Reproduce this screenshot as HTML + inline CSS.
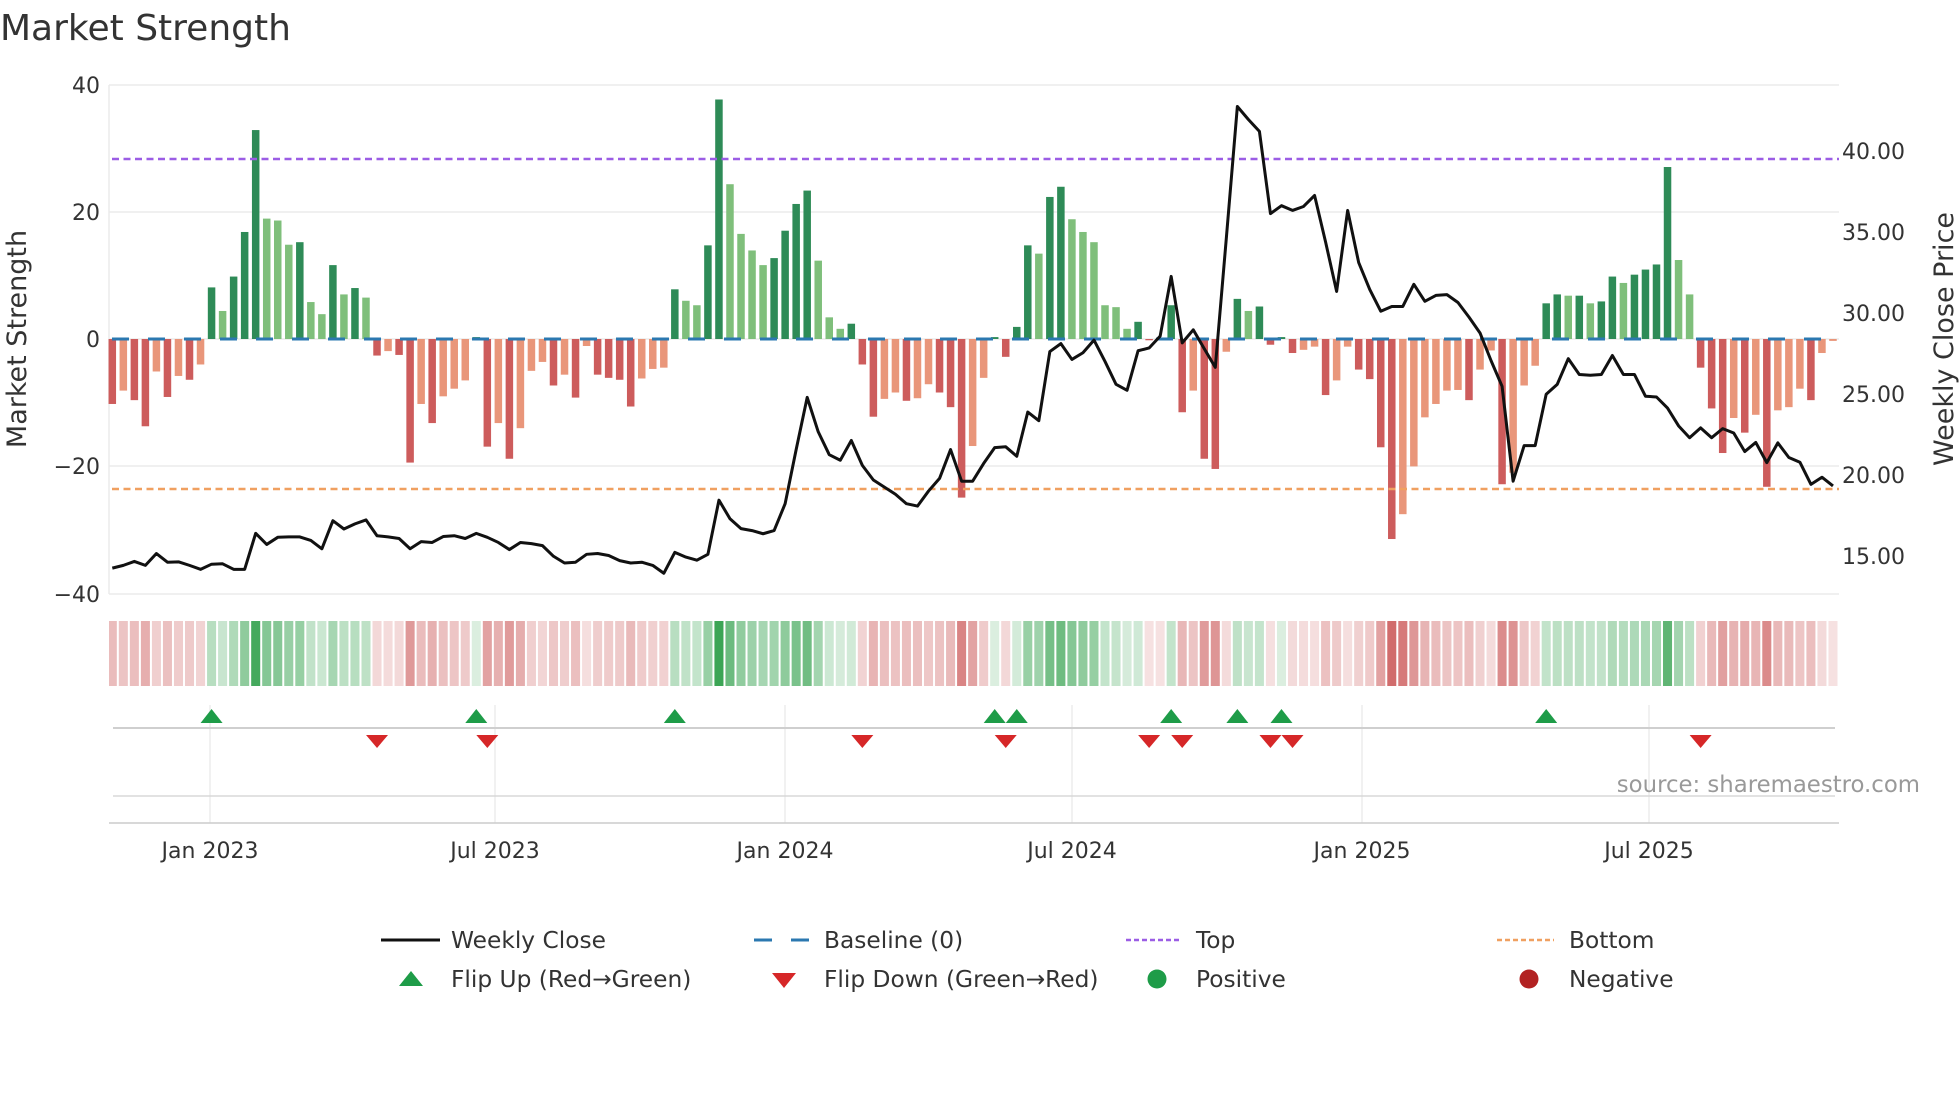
<!DOCTYPE html>
<html><head><meta charset="utf-8">
<style>
html,body{margin:0;padding:0;background:#fff;}
body{width:1960px;height:1102px;overflow:hidden;position:relative;font-family:"DejaVu Sans","Liberation Sans",sans-serif;color:#333;}
svg{position:absolute;left:0;top:0;}
text{font-family:"DejaVu Sans","Liberation Sans",sans-serif;}
</style></head><body>
<svg id="s" width="1960" height="1102" viewBox="0 0 1960 1102" xmlns="http://www.w3.org/2000/svg">
<text x="0" y="40" font-size="36" fill="#333">Market Strength</text>
<g stroke="#ebebeb" stroke-width="1.5">
<line x1="109" y1="85" x2="1839" y2="85"/><line x1="109" y1="212" x2="1839" y2="212"/>
<line x1="109" y1="339" x2="1839" y2="339"/><line x1="109" y1="466" x2="1839" y2="466"/>
<line x1="109" y1="594" x2="1839" y2="594"/><line x1="109" y1="85" x2="109" y2="594"/>
</g>
<g font-size="22" fill="#333" text-anchor="end">
<text x="100" y="93">40</text><text x="100" y="220">20</text><text x="100" y="347">0</text>
<text x="100" y="474">−20</text><text x="100" y="602">−40</text>
</g>
<g font-size="22" fill="#333">
<text x="1842" y="159">40.00</text><text x="1842" y="240">35.00</text><text x="1842" y="321">30.00</text>
<text x="1842" y="402">25.00</text><text x="1842" y="483">20.00</text><text x="1842" y="564">15.00</text>
</g>
<text transform="translate(26,339) rotate(-90)" font-size="27" fill="#333" text-anchor="middle">Market Strength</text>
<text transform="translate(1953,339) rotate(-90)" font-size="27" fill="#333" text-anchor="middle">Weekly Close Price</text>
<g id="bars"></g>
<line x1="112" y1="159" x2="1839" y2="159" stroke="#9b5de5" stroke-width="2.5" stroke-dasharray="7 4.5"/>
<line x1="112" y1="489" x2="1839" y2="489" stroke="#f0a060" stroke-width="2.5" stroke-dasharray="7 4.5"/>
<line x1="112" y1="339" x2="1825" y2="339" stroke="#2b78b0" stroke-width="3" stroke-dasharray="17 19"/>
<polyline id="price" fill="none" stroke="#111" stroke-width="3" stroke-linejoin="round"/>
<g id="strip"></g>
<g stroke="#ececec" stroke-width="1.5">
<line x1="210" y1="705" x2="210" y2="823"/><line x1="495" y1="705" x2="495" y2="823"/>
<line x1="785" y1="705" x2="785" y2="823"/><line x1="1072" y1="705" x2="1072" y2="823"/>
<line x1="1362" y1="705" x2="1362" y2="823"/><line x1="1649" y1="705" x2="1649" y2="823"/>
</g>
<line x1="113" y1="728" x2="1835" y2="728" stroke="#cfcfcf" stroke-width="2"/>
<line x1="113" y1="796" x2="1835" y2="796" stroke="#d8d8d8" stroke-width="1.5"/>
<line x1="109" y1="823" x2="1839" y2="823" stroke="#cccccc" stroke-width="1.5"/>
<g id="marks"></g>
<text x="1920" y="792" font-size="22.8" fill="#999" text-anchor="end">source: sharemaestro.com</text>
<g font-size="22" fill="#333" text-anchor="middle">
<text x="210" y="858">Jan 2023</text><text x="495" y="858">Jul 2023</text><text x="785" y="858">Jan 2024</text>
<text x="1072" y="858">Jul 2024</text><text x="1362" y="858">Jan 2025</text><text x="1649" y="858">Jul 2025</text>
</g>
<g font-size="23.3" fill="#333">
<line x1="381" y1="940" x2="440" y2="940" stroke="#111" stroke-width="3"/>
<text x="451" y="948">Weekly Close</text>
<line x1="754" y1="940" x2="772" y2="940" stroke="#2b78b0" stroke-width="3"/>
<line x1="791" y1="940" x2="809" y2="940" stroke="#2b78b0" stroke-width="3"/>
<text x="824" y="948">Baseline (0)</text>
<line x1="1126" y1="940" x2="1181" y2="940" stroke="#9b5de5" stroke-width="2.5" stroke-dasharray="5 3"/>
<text x="1196" y="948">Top</text>
<line x1="1497" y1="940" x2="1554" y2="940" stroke="#f0a060" stroke-width="2.5" stroke-dasharray="5 3"/>
<text x="1569" y="948">Bottom</text>
<polygon points="399,986 423,986 411,971" fill="#1e9c48"/>
<text x="451" y="987">Flip Up (Red→Green)</text>
<polygon points="772,973 796,973 784,988" fill="#d62728"/>
<text x="824" y="987">Flip Down (Green→Red)</text>
<circle cx="1157" cy="979" r="9.5" fill="#1e9c48"/>
<text x="1196" y="987">Positive</text>
<circle cx="1529" cy="979" r="9.5" fill="#b22222"/>
<text x="1569" y="987">Negative</text>
</g>
</svg>
<script>
var v=[-10.2,-8.1,-9.6,-13.7,-5.1,-9.1,-5.8,-6.4,-4.0,8.1,4.4,9.8,16.8,32.8,18.9,18.6,14.8,15.2,5.8,3.9,11.6,7.0,8.0,6.5,-2.6,-1.9,-2.5,-19.4,-10.2,-13.2,-9.0,-7.8,-6.5,0.3,-16.9,-13.2,-18.8,-14.0,-5.0,-3.6,-7.3,
-5.6,-9.2,-1.1,-5.6,-6.1,-6.4,-10.6,-6.2,-4.7,-4.5,7.8,6.0,5.3,14.7,37.6,24.3,16.5,13.9,11.6,12.7,17.0,21.2,23.3,12.3,3.4,1.6,2.4,-4.0,-12.2,-9.4,-8.4,-9.7,-9.3,-7.1,-8.4,-10.7,-24.9,-16.8,-6.1,
0.3,-2.8,1.9,14.7,13.4,22.3,23.9,18.8,16.8,15.2,5.3,5.0,1.6,2.7,-0.2,-0.2,5.3,-11.5,-8.1,-18.8,-20.4,-2.0,6.3,4.4,5.1,-0.9,0.3,-2.2,-1.7,-1.2,-8.8,-6.5,-1.2,-4.8,-6.3,-17.0,-31.4,-27.5,-20.0,-12.3,-10.2,
-8.1,-8.0,-9.6,-4.8,-1.8,-22.8,-21,-7.3,-4.2,5.6,7.0,6.8,6.8,5.6,5.9,9.8,8.8,10.1,10.9,11.7,27.0,12.4,7.0,-4.5,-10.9,-17.9,-12.4,-14.7,-11.9,-23.2,-11.2,-10.7,-7.8,-9.6,-2.2,-0.3];
var p=[1235,1228,1218,1228,1198,1220,1219,1228,1238,1225,1224,1238,1238,1147,1175,1157,1156,1156,1165,1186,1115,1136,1123,1113,1153,1156,1160,1186,1168,1170,1155,1153,1160,1147,1157,1170,1188,1170,1173,1178,1205,
1222,1220,1200,1198,1203,1216,1222,1220,1228,1248,1195,1207,1215,1200,1063,1110,1135,1140,1148,1140,1072,935,803,890,948,962,912,975,1012,1030,1048,1072,1078,1040,1008,935,1015,1015,970,930,
928,952,840,862,687,667,707,690,658,712,770,785,685,678,648,497,665,632,680,727,400,67,100,130,338,318,330,320,292,410,535,330,462,530,585,573,573,517,560,545,
543,563,600,640,710,775,1015,925,925,795,770,705,745,747,745,697,745,745,800,802,830,875,905,880,905,882,893,940,917,968,918,955,967,1023,1005,1027];
var NS="http://www.w3.org/2000/svg";
function el(t,a,par){var e=document.createElementNS(NS,t);for(var k in a)e.setAttribute(k,a[k]);document.getElementById(par).appendChild(e);return e;}
var step=11.03,x0=112.3,z=339,u=6.37;
for(var i=0;i<v.length;i++){
 var c=x0+step*i,val=v[i],prev=i>0?v[i-1]:0;
 var strong=(val>=0)?(i==0||prev<0||val>=prev):(i==0||prev>=0||val<=prev);
 var col=val>=0?(strong?"#2e8b57":"#7fbf7b"):(strong?"#cd5c5c":"#e9967a");
 var h=Math.abs(val)*u; var y=val>=0?z-h:z;
 if(h>0.5) el("rect",{x:(c-3.75).toFixed(2),y:y.toFixed(2),width:7.5,height:h.toFixed(2),fill:col},"bars");
 var a=Math.min(1,0.18+0.85*Math.abs(val)/36);
 var base=val>=0?[60,165,85]:[205,95,95];
 var rgb=base.map(function(b){return Math.round(255-(255-b)*a);});
 var l=Math.max(109,c-step/2+1),r=Math.min(1839,c+step/2-1);
 el("rect",{x:l.toFixed(2),y:621,width:(r-l).toFixed(2),height:65,fill:"rgb("+rgb.join(",")+")"},"strip");
 if(i>0){
  if(prev<0&&val>=0) el("polygon",{points:(c-11)+",723 "+(c+11)+",723 "+c+",709",fill:"#1e9c48"},"marks");
  if(prev>=0&&val<0) el("polygon",{points:(c-11)+",735 "+(c+11)+",735 "+c+",748",fill:"#d62728"},"marks");
 }
}
var pts=[];for(var j=0;j<p.length;j++){pts.push((x0+step*j).toFixed(2)+","+(80+p[j]/2.53).toFixed(2));}
document.getElementById("price").setAttribute("points",pts.join(" "));
</script>
</body></html>
